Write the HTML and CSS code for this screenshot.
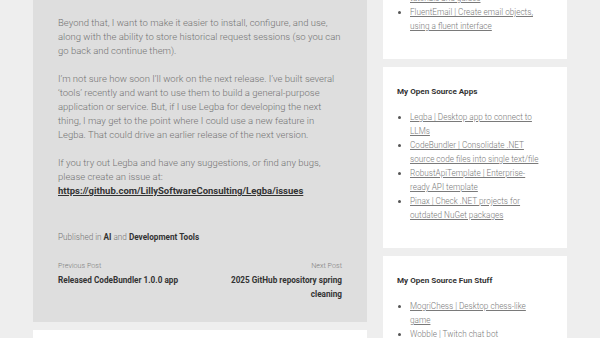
FILE: index.html
```html
<!DOCTYPE html>
<html lang="en">
<head>
<meta charset="utf-8">
<title>Legba</title>
<link rel="stylesheet" href="styles.css">
</head>
<body>
<div class="page">
  <main class="main">
    <article class="post">
      <div class="entry">
        <p>Beyond that, I want to make it easier to install, configure, and use, along with the ability to store historical request sessions (so you can go back and continue them).</p>
        <p>I’m not sure how soon I’ll work on the next release. I’ve built several ‘tools’ recently and want to use them to build a general-purpose application or service. But, if I use Legba for developing the next thing, I may get to the point where I could use a new feature in Legba. That could drive an earlier release of the next version.</p>
        <p>If you try out Legba and have any suggestions, or find any bugs, please create an issue at: <a class="strong-link" href="#">https://github.com/LillySoftwareConsulting/Legba/issues</a></p>
      </div>
      <div class="cats">Published in <a href="#">AI</a> and <a href="#">Development Tools</a></div>
      <nav class="post-nav">
        <div class="nav-prev">
          <div class="nav-label">Previous Post</div>
          <a class="nav-title" href="#">Released CodeBundler 1.0.0 app</a>
        </div>
        <div class="nav-next">
          <div class="nav-label">Next Post</div>
          <a class="nav-title" href="#">2025 GitHub repository spring cleaning</a>
        </div>
      </nav>
    </article>
    <section class="comments"></section>
  </main>
  <aside class="sidebar">
    <div class="widget first">
      <ul>
        <li><a href="#">ScottLilly.com | Programming tutorials and guides</a></li>
        <li><a href="#">FluentEmail | Create email objects, using a fluent interface</a></li>
      </ul>
    </div>
    <div class="widget">
      <h3>My Open Source Apps</h3>
      <ul>
        <li><a href="#">Legba | Desktop app to connect to LLMs</a></li>
        <li><a href="#">CodeBundler | Consolidate .NET source code files into single text/file</a></li>
        <li><a href="#">RobustApiTemplate | Enterprise-ready API template</a></li>
        <li><a href="#">Pinax | Check .NET projects for outdated NuGet packages</a></li>
      </ul>
    </div>
    <div class="widget">
      <h3>My Open Source Fun Stuff</h3>
      <ul>
        <li><a href="#">MogriChess | Desktop chess-like game</a></li>
        <li><a href="#">Wobble | Twitch chat bot</a></li>
        <li><a href="#">Engine | Text adventure engine</a></li>
      </ul>
    </div>
  </aside>
</div>
</body>
</html>
```

FILE: styles.css
```css
html, body {
  margin: 0;
  padding: 0;
  background: #eeeeee;
  font-family: Roboto, "Liberation Sans", Arial, sans-serif;
  height: 338px;
  overflow: hidden;
}
.page {
  display: flex;
  gap: 16px;
  padding: 0 33px;
  align-items: flex-start;
}
.main {
  width: 334px;
  flex: none;
  display: flex;
  flex-direction: column;
  gap: 8px;
}
.post {
  background: #dedede;
  padding: 16px 25px 21px;
  color: #747474;
  font-size: 9.5px;
  font-weight: 300;
  line-height: 14px;
}
.entry p {
  margin: 0 0 14px;
}
.entry p:last-child { margin-bottom: 0; }
.strong-link {
  color: #333;
  font-weight: 700;
  text-decoration: underline;
}
.cats {
  margin-top: 32px;
  font-size: 8.2px;
}
.cats a {
  color: #333;
  font-weight: 700;
  text-decoration: none;
}
.post-nav {
  margin-top: 15px;
  display: flex;
  justify-content: space-between;
  gap: 20px;
  font-size: 8.2px;
}
.nav-prev, .nav-next { width: 45%; }
.nav-next { text-align: right; }
.nav-label {
  font-size: 7.2px;
  line-height: 14px;
  color: #7c7c7c;
}
.nav-title {
  color: #333;
  font-weight: 700;
  text-decoration: none;
}
.comments {
  background: #ffffff;
  height: 80px;
}
.sidebar {
  width: 184px;
  flex: none;
  display: flex;
  flex-direction: column;
  gap: 8px;
  margin-top: -23px;
}
.widget {
  background: #ffffff;
  padding: 17px 27px 26px 14px;
  font-size: 8.2px;
  line-height: 14px;
}
.widget.first { padding-top: 0; }
.widget h3 {
  margin: 0 0 12px;
  font-size: 8.1px;
  line-height: 14px;
  font-weight: 700;
  color: #333;
}
.widget ul {
  margin: 0;
  padding-left: 13px;
  list-style: disc;
  color: #555;
}
.widget li a {
  color: #7a7a7a;
  font-weight: 300;
  text-decoration: underline;
}
```
